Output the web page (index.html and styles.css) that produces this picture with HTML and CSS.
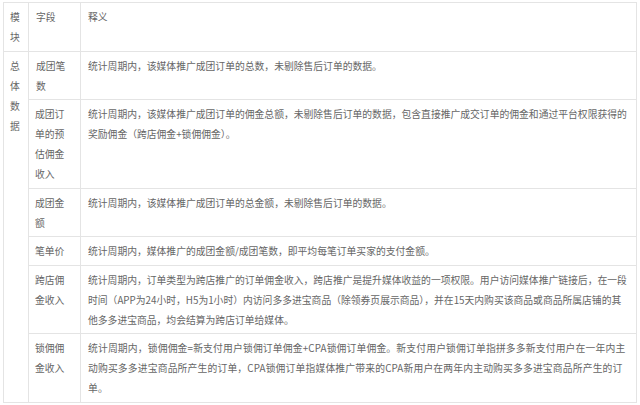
FILE: index.html
```html
<!DOCTYPE html>
<html lang="zh-CN">
<head>
    <meta charset="UTF-8">
    <meta name="viewport" content="width=device-width, initial-scale=1.0">
    <title>指标释义</title>
    <link rel="stylesheet" href="styles.css">
</head>
<body>
    <table class="metrics">
        <colgroup>
            <col class="col-module">
            <col class="col-field">
            <col class="col-desc">
        </colgroup>
        <tbody>
            <tr>
                <td>模块</td>
                <td>字段</td>
                <td>释义</td>
            </tr>
            <tr>
                <td rowspan="6">总体数据</td>
                <td>成团笔数</td>
                <td>统计周期内，该媒体推广成团订单的总数，未剔除售后订单的数据。</td>
            </tr>
            <tr>
                <td>成团订单的预估佣金收入</td>
                <td>统计周期内，该媒体推广成团订单的佣金总额，未剔除售后订单的数据，包含直接推广成交订单的佣金和通过平台权限获得的奖励佣金（跨店佣金+锁佣佣金）。</td>
            </tr>
            <tr>
                <td>成团金额</td>
                <td>统计周期内，该媒体推广成团订单的总金额，未剔除售后订单的数据。</td>
            </tr>
            <tr>
                <td>笔单价</td>
                <td>统计周期内，媒体推广的成团金额/成团笔数，即平均每笔订单买家的支付金额。</td>
            </tr>
            <tr>
                <td>跨店佣金收入</td>
                <td>统计周期内，订单类型为跨店推广的订单佣金收入，跨店推广是提升媒体收益的一项权限。用户访问媒体推广链接后，在一段时间（APP为24小时，H5为1小时）内访问多多进宝商品（除领券页展示商品），并在15天内购买该商品或商品所属店铺的其他多多进宝商品，均会结算为跨店订单给媒体。</td>
            </tr>
            <tr>
                <td>锁佣佣金收入</td>
                <td class="loose">统计周期内，锁佣佣金=新支付用户锁佣订单佣金+CPA锁佣订单佣金。新支付用户锁佣订单指拼多多新支付用户在一年内主动购买多多进宝商品所产生的订单，CPA锁佣订单指媒体推广带来的CPA新用户在两年内主动购买多多进宝商品所产生的订单。</td>
            </tr>
        </tbody>
    </table>
</body>
</html>
```

FILE: styles.css
```css
body {
    margin: 0;
    padding: 2px 0 0 3px;
    background: #fff;
    font-family: "Noto Sans CJK SC", "Noto Sans", sans-serif;
    font-size: 9.8px;
    line-height: 20px;
    color: #666;
}

.metrics {
    width: 634px;
    border-collapse: collapse;
    table-layout: fixed;
}

.col-module {
    width: 25px;
}

.col-field {
    width: 52px;
}

.metrics td {
    border: 1px solid #e4e4e4;
    padding: 4px 7px 3.5px;
    vertical-align: top;
    text-align: left;
    word-break: break-all;
}

.metrics td:first-child {
    padding-left: 6px;
    padding-right: 6px;
}

.metrics td.loose {
    letter-spacing: 0.16px;
}
```
